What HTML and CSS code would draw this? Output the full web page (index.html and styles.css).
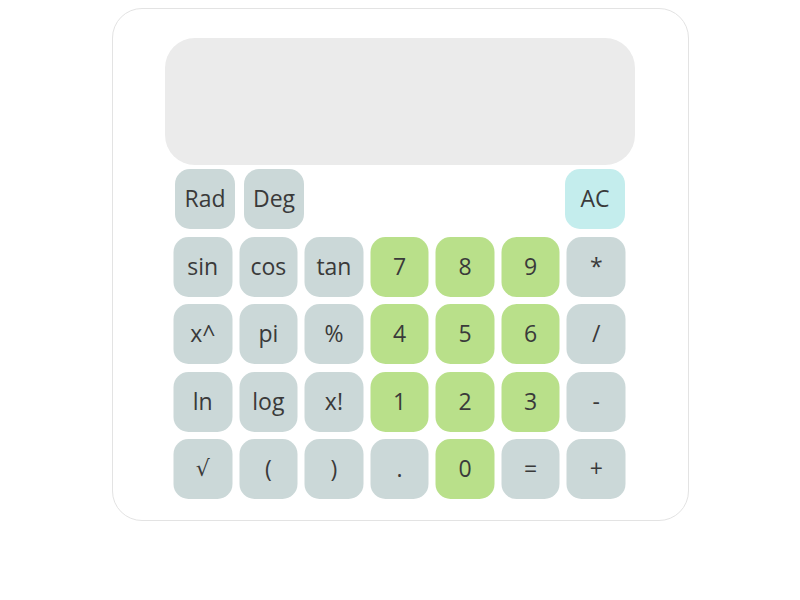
FILE: index.html
```html
<!DOCTYPE html>
<html>
<head>
	<meta charset="utf-8">
	<title>Calculator</title>
	<link rel="stylesheet" href="styles.css">
</head>
<body>
	<div class="calc">
		<div class="display" id="display"></div>
		<div class="modes">
			<button class="btn fn">Rad</button>
			<button class="btn fn">Deg</button>
			<button class="btn clear">AC</button>
		</div>
		<div class="keys">
			<button class="btn fn">sin</button>
			<button class="btn fn">cos</button>
			<button class="btn fn">tan</button>
			<button class="btn num">7</button>
			<button class="btn num">8</button>
			<button class="btn num">9</button>
			<button class="btn fn">*</button>

			<button class="btn fn">x^</button>
			<button class="btn fn">pi</button>
			<button class="btn fn">%</button>
			<button class="btn num">4</button>
			<button class="btn num">5</button>
			<button class="btn num">6</button>
			<button class="btn fn">/</button>

			<button class="btn fn">ln</button>
			<button class="btn fn">log</button>
			<button class="btn fn">x!</button>
			<button class="btn num">1</button>
			<button class="btn num">2</button>
			<button class="btn num">3</button>
			<button class="btn fn">-</button>

			<button class="btn fn sqrt">&radic;</button>
			<button class="btn fn">(</button>
			<button class="btn fn">)</button>
			<button class="btn fn">.</button>
			<button class="btn num">0</button>
			<button class="btn fn">=</button>
			<button class="btn fn">+</button>
		</div>
	</div>
</body>
</html>
```

FILE: styles.css
```css
body {
	margin: 8px;
	background: #ffffff;
	font-family: "Open Sans", "Noto Sans", sans-serif;
}

.calc {
	width: 575px;
	height: 482px;
	margin: 0 auto;
	padding-top: 29px;
	border: 1px solid #e3e3e3;
	border-radius: 30px;
	box-sizing: content-box;
}

.display {
	width: 470px;
	height: 127px;
	margin: 0 auto;
	background-color: #ebebeb;
	border-radius: 30px;
}

.modes {
	width: 450px;
	margin: 4px auto 0;
	display: flex;
	gap: 9px;
}

.modes .clear {
	margin-left: auto;
}

.modes .btn {
	width: 60px;
	height: 60px;
}

.keys {
	width: 452px;
	margin: 8px auto 0;
	display: grid;
	grid-template-columns: repeat(7, 1fr);
	grid-auto-rows: 60px;
	column-gap: 7px;
	row-gap: 7.4px;
	transform: translateX(-0.5px);
}

.btn {
	border: none;
	border-radius: 15px;
	padding: 0 0 2px;
	font-family: inherit;
	font-size: 23px;
	color: #3a3a3a;
	cursor: pointer;
}

.fn {
	background-color: #cbd8d8;
}

.num {
	background-color: #b9e08a;
}

.clear {
	background-color: #c4eded;
}

.sqrt {
	font-family: "DejaVu Serif", serif;
	font-size: 22px;
}
```
